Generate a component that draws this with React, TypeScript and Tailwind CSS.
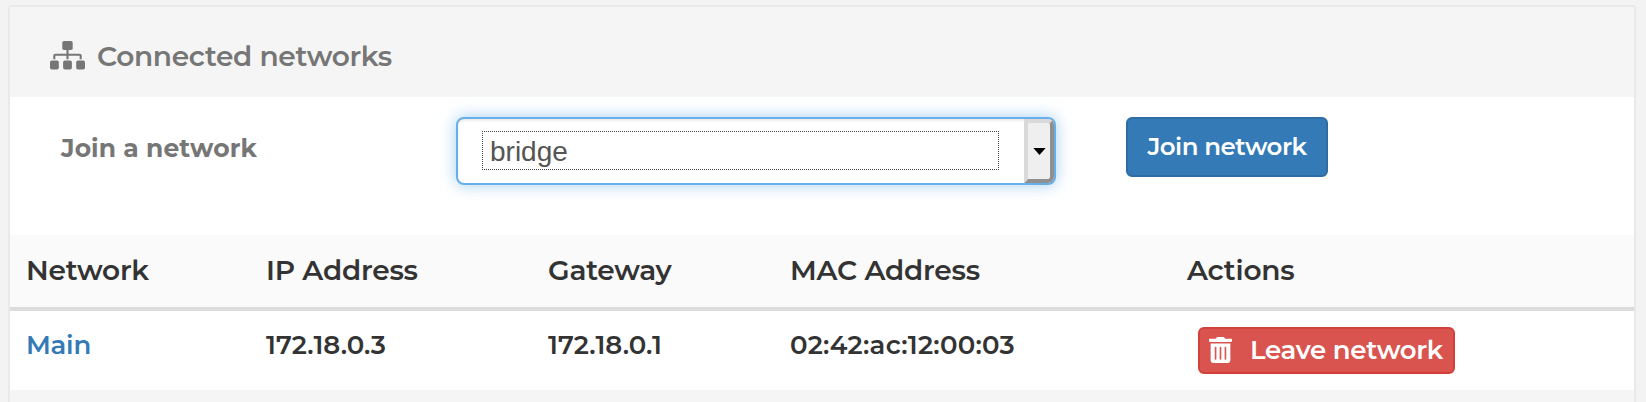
import React from "react";
import { FaTrashAlt } from "react-icons/fa";

const cell = "whitespace-nowrap leading-none";

function Sitemap() {
  return (
    <svg width="35" height="29" viewBox="0 0 35 29" className="shrink-0" fill="currentColor">
      <rect x="12.3" y="0" width="10.4" height="9" rx="1.8" />
      <rect x="0" y="19.4" width="8.8" height="9.2" rx="1.8" />
      <rect x="13.1" y="19.4" width="8.8" height="9.2" rx="1.8" />
      <rect x="26.2" y="19.4" width="8.8" height="9.2" rx="1.8" />
      <path d="M17.5 8v10.3M4.3 18.3v-3.6q0-.9.9-.9h24.6q.9 0 .9.9v3.6" fill="none" stroke="currentColor" strokeWidth="2.1" />
    </svg>
  );
}

export default function App() {
  return (
    <div className="h-[402px] overflow-hidden bg-[#f3f3f3] pl-2 pt-[5px] font-['Montserrat','Lato',sans-serif]">
      <div className="h-[420px] w-[1628px] rounded-[4px] border-2 border-[#e9e9e9] bg-[#f5f5f5]">
        <div className="flex h-[90px] items-start bg-[#f5f5f5] pl-10 pt-[34px] text-[#767676]">
          <Sitemap />
          <h2 className="ml-3 mt-[1px] whitespace-nowrap text-[28px] font-semibold leading-none tracking-[-0.32px]">Connected networks</h2>
        </div>
        <div className="flex h-[138px] items-start bg-white pt-5">
          <label className="ml-[51px] mt-[18px] w-[395px] whitespace-nowrap text-[25px] font-bold leading-[26px] tracking-[0.1px] text-[#767676]">Join a network</label>
          <div className="flex h-[68px] w-[600px] overflow-visible rounded-lg border-2 border-[#66afe9] bg-white shadow-[inset_0_2px_2px_rgba(0,0,0,0.075),0_0_16px_rgba(102,175,233,0.6)]">
            <div className="ml-6 mt-3 h-[39px] w-[517px] bg-[linear-gradient(90deg,#444_50%,transparent_50%),linear-gradient(90deg,#444_50%,transparent_50%),linear-gradient(#444_50%,transparent_50%),linear-gradient(#444_50%,transparent_50%)] bg-[length:2px_1px,2px_1px,1px_2px,1px_2px] bg-[position:left_top,left_bottom,left_top,right_top] [background-repeat:repeat-x,repeat-x,repeat-y,repeat-y] pl-2 font-['Liberation_Sans',sans-serif] text-[28px] leading-[41px] text-[#555]">bridge</div>
            <div className="ml-auto flex h-16 w-[30px] items-center justify-center rounded-r-[6px] border-4 border-b-[#909090] border-l-[#d9d9d9] border-r-[#909090] border-t-[#d9d9d9] bg-[#efefef]">
              <svg className="shrink-0" width="13" height="7" viewBox="0 0 14 8"><path d="M0 0h14L7 8z" fill="#000" /></svg>
            </div>
          </div>
          <button className="ml-[70px] h-[60px] w-[202px] whitespace-nowrap rounded-[6px] border-2 border-[#2e6da4] bg-[#337ab7] pb-[2px] text-[24.5px] font-semibold leading-none tracking-[-0.5px] text-white">Join network</button>
        </div>
        <div className="grid h-[76px] grid-cols-[240px_282px_242px_397px_1fr] box-border border-b-4 border-[#dcdcdc] bg-[#fafafa] pl-4 pt-[21px] text-[28px] font-semibold tracking-[-0.22px] text-[#333]">
          <span className={cell}>Network</span>
          <span className={cell}>IP Address</span>
          <span className={cell}>Gateway</span>
          <span className={cell}>MAC Address</span>
          <span className={cell}>Actions</span>
        </div>
        <div className="grid h-[79px] grid-cols-[240px_282px_242px_397px_1fr] bg-white pl-4 pt-4 text-[26px] font-semibold text-[#333]">
          <a className="mt-[5px] whitespace-nowrap leading-none tracking-[-0.25px] text-[#337ab7]">Main</a>
          <span className="mt-[5px] whitespace-nowrap leading-none tracking-[0.08px]">172.18.0.3</span>
          <span className="mt-[5px] whitespace-nowrap leading-none tracking-[0.08px]">172.18.0.1</span>
          <span className="mt-[5px] whitespace-nowrap leading-none tracking-[0.25px]">02:42:ac:12:00:03</span>
          <button className="ml-[11px] flex h-[47px] w-[257px] items-center rounded-[6px] border-2 border-[#d43f3a] bg-[#d9534f] pb-[2px] pl-[9px] text-white">
            <FaTrashAlt className="h-[26px] w-[23px] shrink-0" preserveAspectRatio="none" />
            <span className="ml-[18px] whitespace-nowrap leading-none tracking-[-0.32px]">Leave network</span>
          </button>
        </div>
      </div>
    </div>
  );
}
